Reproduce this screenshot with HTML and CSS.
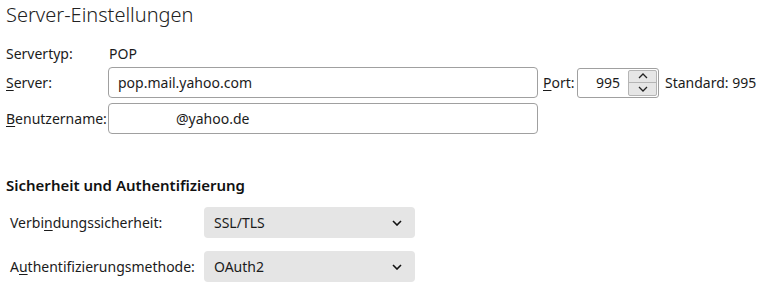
FILE: index.html
```html
<!DOCTYPE html>
<html lang="de">
<head>
    <meta charset="UTF-8">
    <title>Server-Einstellungen</title>
    <link rel="stylesheet" href="styles.css">
</head>
<body>
    <h1 class="title">Server-Einstellungen</h1>

    <div class="server-grid">
        <div class="row row-plain">
            <span class="label">Servertyp:</span>
            <span class="value">POP</span>
        </div>
        <div class="row">
            <label class="label" for="server"><u>S</u>erver:</label>
            <input type="text" id="server" class="field" value="pop.mail.yahoo.com">
            <label class="port-label" for="port"><u>P</u>ort:</label>
            <div class="spinner">
                <input type="text" id="port" class="spin-value" value="995">
                <div class="spin-buttons">
                    <span class="spin-btn">
                        <svg width="10" height="6" viewBox="0 0 10 6"><path d="M1 5 L5 1 L9 5" fill="none" stroke="#222" stroke-width="1.3"/></svg>
                    </span>
                    <span class="spin-btn">
                        <svg width="10" height="6" viewBox="0 0 10 6"><path d="M1 1 L5 5 L9 1" fill="none" stroke="#222" stroke-width="1.3"/></svg>
                    </span>
                </div>
            </div>
            <span class="standard">Standard: 995</span>
        </div>
        <div class="row">
            <label class="label" for="user"><u>B</u>enutzername:</label>
            <input type="text" id="user" class="field user-field" value="@yahoo.de">
        </div>
    </div>

    <h2 class="section">Sicherheit und Authentifizierung</h2>

    <div class="security">
        <div class="sec-row">
            <span class="sec-label">Verbi<u>n</u>dungssicherheit:</span>
            <div class="select">
                <span>SSL/TLS</span>
                <svg width="10" height="6" viewBox="0 0 10 6"><path d="M1 1 L5 5 L9 1" fill="none" stroke="#111" stroke-width="1.6"/></svg>
            </div>
        </div>
        <div class="sec-row">
            <span class="sec-label">A<u>u</u>thentifizierungsmethode:</span>
            <div class="select">
                <span>OAuth2</span>
                <svg width="10" height="6" viewBox="0 0 10 6"><path d="M1 1 L5 5 L9 1" fill="none" stroke="#111" stroke-width="1.6"/></svg>
            </div>
        </div>
    </div>
</body>
</html>
```

FILE: styles.css
```css
body {
    font-family: "Noto Sans", sans-serif;
    font-size: 14px;
    color: #1b1b1b;
    background: #fff;
    margin: 0;
    padding: 0 6px;
}
u {
    text-decoration-thickness: 1px;
    text-underline-offset: 2px;
}
.title {
    font-size: 20px;
    font-weight: 300;
    margin: 0;
    line-height: 30px;
    color: #222;
}
.server-grid {
    margin-top: 14px;
    display: flex;
    flex-direction: column;
    gap: 5px;
}
.row {
    display: flex;
    align-items: center;
    height: 31px;
    white-space: nowrap;
}
.row > * {
    flex-shrink: 0;
}
.row-plain {
    height: 18px;
}
.label {
    width: 102px;
}
.value {
    padding-left: 1px;
}
.field {
    box-sizing: border-box;
    width: 430px;
    height: 31px;
    border: 1px solid #a0a0a0;
    border-radius: 4px;
    padding: 0 9px;
    font-family: inherit;
    font-size: 14px;
    color: #1b1b1b;
    outline: none;
}
.user-field {
    text-indent: 58px;
}
.port-label {
    margin-left: 5px;
    width: 34px;
}
.spinner {
    box-sizing: border-box;
    width: 82px;
    height: 30px;
    border: 1px solid #a0a0a0;
    border-radius: 3px;
    display: flex;
    padding: 1px;
}
.spin-value {
    width: 41px;
    border: none;
    padding: 0;
    text-align: right;
    font-family: inherit;
    font-size: 14px;
    color: #1b1b1b;
    outline: none;
}
.spin-buttons {
    margin-left: auto;
    width: 27px;
    display: flex;
    flex-direction: column;
    border: 1px solid #b5b5b5;
    border-radius: 2px;
    background: #e6e6e6;
}
.spin-btn {
    flex: 1;
    display: flex;
    align-items: center;
    justify-content: center;
}
.spin-btn + .spin-btn {
    border-top: 1px solid #b5b5b5;
}
.standard {
    margin-left: 6px;
}
.section {
    font-size: 15px;
    font-weight: 600;
    margin: 41px 0 0;
    line-height: 20px;
    color: #111;
}
.security {
    margin-top: 12px;
    padding-left: 4px;
    display: flex;
    flex-direction: column;
    gap: 13px;
}
.sec-row {
    display: flex;
    align-items: center;
}
.sec-label {
    width: 194px;
}
.select {
    box-sizing: border-box;
    width: 211px;
    height: 31px;
    background: #e5e5e5;
    border-radius: 4px;
    display: flex;
    align-items: center;
    justify-content: space-between;
    padding: 0 13px 0 10px;
    font-size: 14px;
}
```
